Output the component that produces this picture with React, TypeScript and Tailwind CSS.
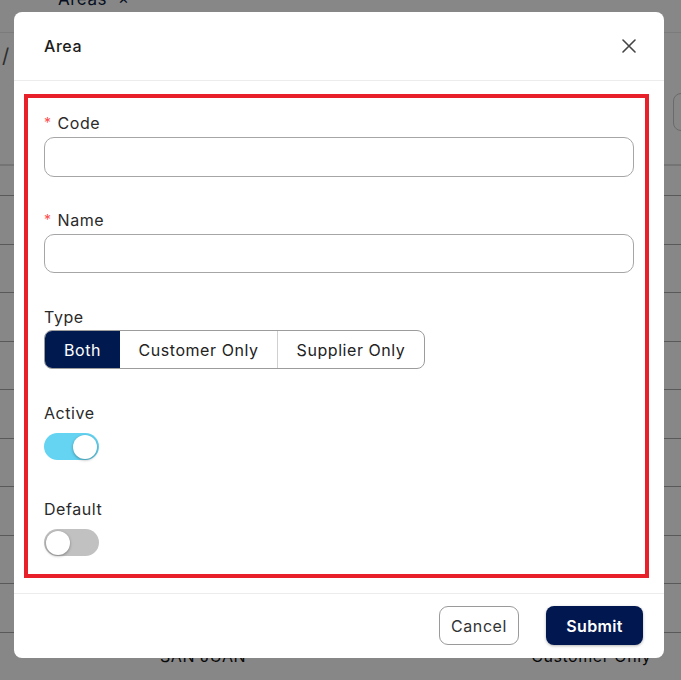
import React from "react";

function Toggle({ on }: { on: boolean }) {
  return (
    <div
      className={
        on
          ? "relative w-[55px] h-[27px] rounded-full bg-[#64d4f2]"
          : "relative w-[55px] h-[27px] rounded-full bg-[#c1c1c1]"
      }
    >
      <div
        className={
          on
            ? "absolute top-[1.5px] right-[2px] w-[24px] h-[24px] rounded-full bg-white shadow-[0_1px_3px_rgba(0,0,0,0.35)]"
            : "absolute top-[1.5px] left-[2px] w-[24px] h-[24px] rounded-full bg-white shadow-[0_1px_3px_rgba(0,0,0,0.35)]"
        }
      />
    </div>
  );
}

function Label({ text, required }: { text: string; required?: boolean }) {
  return (
    <div className="flex items-center h-[22px] text-[16px] leading-[22px] text-[#2a2a2a]">
      {required && <span className="text-[#ff4d4f] text-[14px] mr-[6px] leading-none">*</span>}
      <span>{text}</span>
    </div>
  );
}

export default function App() {
  const rows = Array.from({ length: 9 });
  return (
    <div className="relative w-[681px] h-[680px] overflow-hidden bg-white font-['Inter',sans-serif]">
      {/* underlying page */}
      <div className="flex flex-col w-full h-full">
        <div className="h-[33px] border-b border-[#e8e8e8]">
          <div className="ml-[58px] -mt-[13px] flex items-center gap-[11px] text-[17px] leading-[24px] tracking-[0.03em] text-[#0d1b3d]">
            <span>Areas</span>
            <span className="text-[13px]">✕</span>
          </div>
        </div>
        <div className="h-[60px] flex items-center pl-[2px] text-[20px] text-[#555]">
          <span className="-mt-[14px]">/</span>
        </div>
        <div className="h-[71px] pl-[673px] pt-0">
          <div className="w-[60px] h-[38px] rounded-[8px] border border-[#c8c8c8]" />
        </div>
        <div className="h-[32px] border-t-[2px] border-[#dcdcdc] border-b border-b-[#a8a8a8]" />
        {rows.map((_, i) => (
          <div key={i} className="h-[48.5px] border-b border-[#a8a8a8]" />
        ))}
        <div className="flex-1 flex items-center text-[16px] tracking-[0.035em] text-[#111]">
          <span className="ml-[160px]">SAN JUAN</span>
          <span className="ml-[285px]">Customer Only</span>
        </div>
      </div>
      {/* overlay */}
      <div className="absolute inset-0 bg-[rgba(0,0,0,0.47)]" />

      {/* modal */}
      <div className="absolute left-[14px] top-[12px] w-[650px] h-[646px] bg-white rounded-[8px] flex flex-col tracking-[0.035em]">
        <div className="h-[69px] border-b border-[#ececec] flex items-center justify-between pl-[30px] pr-[28px]">
          <span className="text-[16px] font-medium text-[#1c1c1c]">Area</span>
          <svg width="14" height="14" viewBox="0 0 14 14" className="text-[#444]">
            <path d="M1 1L13 13M13 1L1 13" stroke="currentColor" strokeWidth="1.6" strokeLinecap="round" />
          </svg>
        </div>

        <div className="mt-[13px] ml-[10px] mr-[15px] h-[484px] border-[4px] border-[#e8202a] pt-[14px] pl-[16px] pr-[11px] flex flex-col">
          <Label text="Code" required />
          <input className="mt-[3px] h-[40px] w-full rounded-[10px] border border-[#a6a6a6] outline-none" />

          <div className="mt-[32px]">
            <Label text="Name" required />
          </div>
          <input className="mt-[3px] h-[39px] w-full rounded-[10px] border border-[#a6a6a6] outline-none" />

          <div className="mt-[33px]">
            <Label text="Type" />
          </div>
          <div className="mt-[2px] flex w-[381px] h-[39px] rounded-[8px] border border-[#9c9c9c] overflow-hidden text-[16px]">
            <div className="w-[75px] flex items-center justify-center bg-[#001a4f] text-white">Both</div>
            <div className="w-[157px] flex items-center justify-center text-[#222]">Customer Only</div>
            <div className="w-[147px] flex items-center justify-center border-l border-[#d0d0d0] text-[#222]">Supplier Only</div>
          </div>

          <div className="mt-[33px]">
            <Label text="Active" />
          </div>
          <div className="mt-[9px]">
            <Toggle on />
          </div>

          <div className="mt-[38px]">
            <Label text="Default" />
          </div>
          <div className="mt-[9px]">
            <Toggle on={false} />
          </div>
        </div>

        <div className="mt-[15px] border-t border-[#ececec] pt-[12px] pr-[21px] flex justify-end gap-[27px]">
          <button className="w-[80px] h-[39px] rounded-[9px] border border-[#9a9a9a] bg-white text-[16px] tracking-[0.035em] text-[#333]">
            Cancel
          </button>
          <button className="w-[97px] h-[39px] rounded-[8px] bg-[#00174f] text-[16px] font-semibold tracking-[0.02em] text-white shadow-[0_1px_3px_rgba(0,0,0,0.3)]">
            Submit
          </button>
        </div>
      </div>
    </div>
  );
}
